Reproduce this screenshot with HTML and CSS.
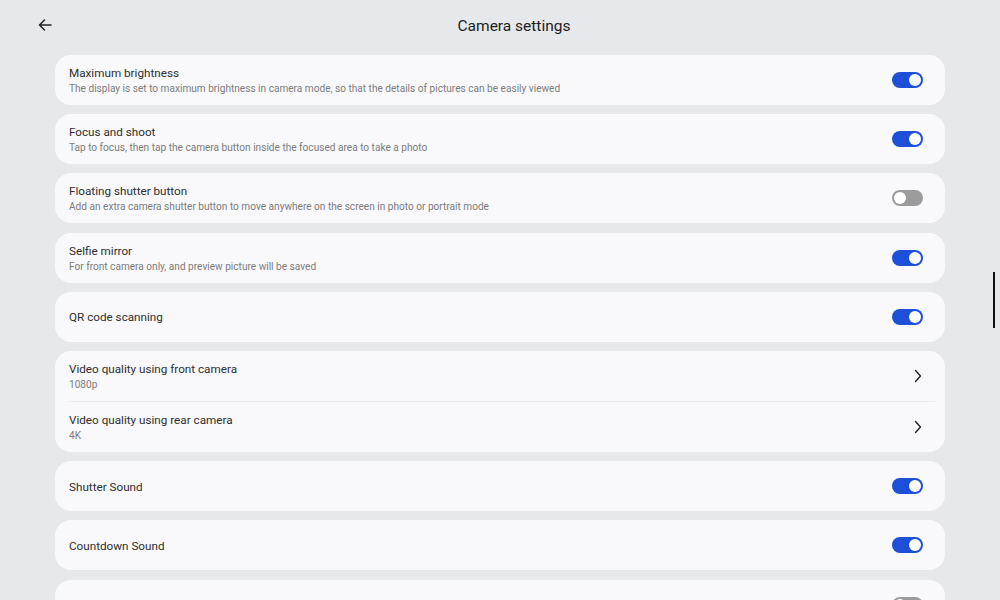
FILE: index.html
```html
<!DOCTYPE html>
<html lang="en">
<head>
  <meta charset="UTF-8">
  <meta name="viewport" content="width=device-width, initial-scale=1.0">
  <title>Camera settings</title>
  <link rel="stylesheet" href="styles.css">
</head>
<body>
  <header class="topbar">
    <button class="back-btn" aria-label="Back">
      <svg width="16" height="16" viewBox="0 0 16 16" fill="none" stroke="#222" stroke-width="1.5" stroke-linecap="round" stroke-linejoin="round">
        <path d="M14 8H2.5M7.5 3L2.5 8l5 5"/>
      </svg>
    </button>
    <h1 class="title">Camera settings</h1>
  </header>

  <main class="list">
    <div class="card">
      <div class="row">
        <div class="text">
          <div class="label">Maximum brightness</div>
          <div class="desc">The display is set to maximum brightness in camera mode, so that the details of pictures can be easily viewed</div>
        </div>
        <span class="switch on"></span>
      </div>
    </div>

    <div class="card">
      <div class="row">
        <div class="text">
          <div class="label">Focus and shoot</div>
          <div class="desc">Tap to focus, then tap the camera button inside the focused area to take a photo</div>
        </div>
        <span class="switch on"></span>
      </div>
    </div>

    <div class="card">
      <div class="row">
        <div class="text">
          <div class="label">Floating shutter button</div>
          <div class="desc">Add an extra camera shutter button to move anywhere on the screen in photo or portrait mode</div>
        </div>
        <span class="switch"></span>
      </div>
    </div>

    <div class="card">
      <div class="row">
        <div class="text">
          <div class="label">Selfie mirror</div>
          <div class="desc">For front camera only, and preview picture will be saved</div>
        </div>
        <span class="switch on"></span>
      </div>
    </div>

    <div class="card">
      <div class="row">
        <div class="text">
          <div class="label">QR code scanning</div>
        </div>
        <span class="switch on"></span>
      </div>
    </div>

    <div class="card">
      <div class="row">
        <div class="text">
          <div class="label">Video quality using front camera</div>
          <div class="desc">1080p</div>
        </div>
        <svg class="chevron" width="8" height="14" viewBox="0 0 8 14" fill="none" stroke="#222" stroke-width="1.4" stroke-linecap="round" stroke-linejoin="round">
          <path d="M1.5 1.5L6.5 7l-5 5.5"/>
        </svg>
      </div>
      <div class="divider"></div>
      <div class="row">
        <div class="text">
          <div class="label">Video quality using rear camera</div>
          <div class="desc">4K</div>
        </div>
        <svg class="chevron" width="8" height="14" viewBox="0 0 8 14" fill="none" stroke="#222" stroke-width="1.4" stroke-linecap="round" stroke-linejoin="round">
          <path d="M1.5 1.5L6.5 7l-5 5.5"/>
        </svg>
      </div>
    </div>

    <div class="card">
      <div class="row">
        <div class="text">
          <div class="label">Shutter Sound</div>
        </div>
        <span class="switch on"></span>
      </div>
    </div>

    <div class="card">
      <div class="row">
        <div class="text">
          <div class="label">Countdown Sound</div>
        </div>
        <span class="switch on"></span>
      </div>
    </div>

    <!-- 下一项只露出顶部 -->
    <div class="card">
      <div class="row">
        <div class="text"></div>
        <span class="switch"></span>
      </div>
    </div>
  </main>

  <div class="scroll-thumb"></div>
</body>
</html>
```

FILE: styles.css
```css
:root {
  --bg: #e7e8ec;
  --card: #f9f9fb;
  --text: #2e2e2e;
  --text-muted: #7c7c7c;
  --accent: #1e4fd8;
  --off: #9b9b9b;
  --divider: #ececee;
}

* {
  margin: 0;
  padding: 0;
  box-sizing: border-box;
}

html, body {
  height: 100%;
  overflow: hidden;
}

body {
  font-family: Roboto, "Noto Sans", "Liberation Sans", sans-serif;
  color: var(--text);
  background-color: var(--bg);
}

/* 顶部标题栏 */
.topbar {
  height: 55px;
  display: flex;
  align-items: center;
  justify-content: center;
  position: relative;
}

.back-btn {
  position: absolute;
  left: 37px;
  top: 17px;
  width: 16px;
  height: 16px;
  background: none;
  border: none;
  display: flex;
}

.title {
  font-size: 15.5px;
  font-weight: 400;
  color: #1c1c1c;
  margin-top: -4px;
  margin-left: 28px;
}

/* 设置列表 */
.list {
  display: flex;
  flex-direction: column;
  gap: 9.2px;
  margin: 0 55px;
}

.card {
  background-color: var(--card);
  border-radius: 16px;
}

.row {
  height: 50px;
  display: flex;
  align-items: center;
  padding: 0 22px 0 14px;
}

.text {
  flex: 1;
  min-width: 0;
  padding-top: 2px;
}

.label {
  font-size: 11.7px;
  line-height: 15px;
  color: var(--text);
}

.desc {
  font-size: 10.1px;
  line-height: 15px;
  color: var(--text-muted);
}

.divider {
  height: 1px;
  margin: 0 10px 0 14px;
  background-color: var(--divider);
}

.chevron {
  margin-right: 1px;
}

/* 开关 */
.switch {
  position: relative;
  width: 31px;
  height: 16px;
  border-radius: 8px;
  background-color: var(--off);
  flex-shrink: 0;
}

.switch::after {
  content: "";
  position: absolute;
  top: 2px;
  left: 2px;
  width: 12px;
  height: 12px;
  border-radius: 50%;
  background-color: #fff;
}

.switch.on {
  background-color: var(--accent);
}

.switch.on::after {
  left: 17px;
}

/* 右侧滚动指示 */
.scroll-thumb {
  position: absolute;
  top: 272px;
  right: 5px;
  width: 2px;
  height: 56px;
  background-color: #111;
}
```
